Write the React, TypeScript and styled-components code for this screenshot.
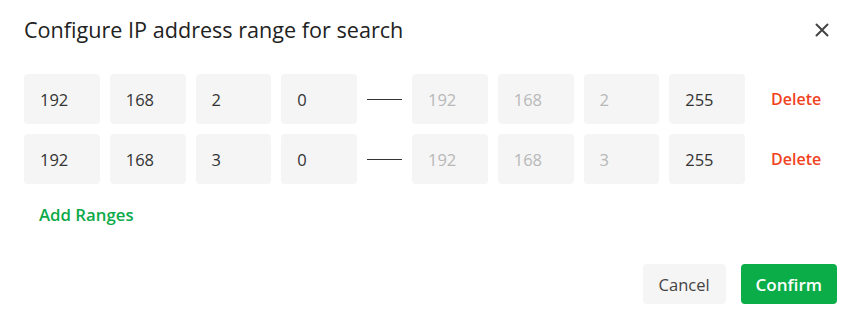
import styled, { createGlobalStyle } from 'styled-components';

const GlobalStyle = createGlobalStyle`
  html, body {
    margin: 0;
    padding: 0;
    background: #ffffff;
  }
  body {
    font-family: 'Open Sans', 'Noto Sans', Arial, sans-serif;
    color: #222;
  }
  * {
    box-sizing: border-box;
  }
`;

type Range = { start: string[]; end: string[] };

const ranges: Range[] = [
  { start: ['192', '168', '2', '0'], end: ['192', '168', '2', '255'] },
  { start: ['192', '168', '3', '0'], end: ['192', '168', '3', '255'] },
];

export default function App() {
  return (
    <>
      <GlobalStyle />
      <Dialog>
        <Header>
          <Title>Configure IP address range for search</Title>
          <CloseButton aria-label="Close">
            <svg width="14" height="14" viewBox="0 0 14 14">
              <path d="M1.5 1.5 L12.5 12.5 M12.5 1.5 L1.5 12.5" stroke="#444" strokeWidth="2" strokeLinecap="round" />
            </svg>
          </CloseButton>
        </Header>

        <RangeList>
          {ranges.map((r, i) => (
            <RangeRow key={i}>
              {r.start.map((v, j) => (
                <Octet key={'s' + j} defaultValue={v} />
              ))}
              <Dash />
              {r.end.map((v, j) => (
                <Octet key={'e' + j} defaultValue={v} disabled={j < 3} />
              ))}
              <DeleteLink>Delete</DeleteLink>
            </RangeRow>
          ))}
        </RangeList>

        <AddLink>Add Ranges</AddLink>

        <Footer>
          <Button>Cancel</Button>
          <Button primary>Confirm</Button>
        </Footer>
      </Dialog>
    </>
  );
}

const Dialog = styled.div`
  width: 855px;
  height: 314px;
  padding: 18px 18px 0 24px;
  display: flex;
  flex-direction: column;
`;

const Header = styled.div`
  display: flex;
  align-items: center;
  justify-content: space-between;
  height: 24px;
`;

const Title = styled.h2`
  margin: 0;
  font-size: 21.6px;
  font-weight: 400;
  line-height: 24px;
  color: #222;
`;

const CloseButton = styled.button`
  border: 0;
  background: none;
  padding: 0;
  margin-right: 8px;
  width: 14px;
  height: 14px;
  display: flex;
  cursor: pointer;
`;

const RangeList = styled.div`
  display: flex;
  flex-direction: column;
  gap: 10px;
  margin-top: 32px;
`;

const RangeRow = styled.div`
  display: flex;
  align-items: center;
  gap: 10px;
`;

const Octet = styled.input`
  width: 75.75px;
  height: 50px;
  border: 0;
  border-radius: 4px;
  background: #f5f5f5;
  padding: 0 0 0 16px;
  font-family: inherit;
  font-size: 16.5px;
  color: #333;
  outline: none;

  &:disabled {
    color: #b8b8b8;
  }
`;

const Dash = styled.span`
  width: 35px;
  height: 1px;
  background: #333;
`;

const DeleteLink = styled.span`
  margin-left: 16px;
  font-size: 16px;
  font-weight: 600;
  color: #f0431d;
  cursor: pointer;
`;

const AddLink = styled.span`
  align-self: flex-start;
  margin: 21px 0 0 15px;
  line-height: 20px;
  font-size: 16.8px;
  font-weight: 600;
  color: #0caa4a;
  cursor: pointer;
`;

const Footer = styled.div`
  display: flex;
  justify-content: flex-end;
  gap: 15px;
  margin-top: 39px;
`;

const Button = styled.button<{ primary?: boolean }>`
  height: 40px;
  padding: 0 ${(p) => (p.primary ? 15 : 16)}px;
  border: 0;
  border-radius: 4px;
  font-family: inherit;
  font-size: ${(p) => (p.primary ? 17 : 16.5)}px;
  font-weight: ${(p) => (p.primary ? 600 : 400)};
  background: ${(p) => (p.primary ? '#0aad47' : '#f5f5f5')};
  color: ${(p) => (p.primary ? '#ffffff' : '#444')};
  cursor: pointer;
`;
